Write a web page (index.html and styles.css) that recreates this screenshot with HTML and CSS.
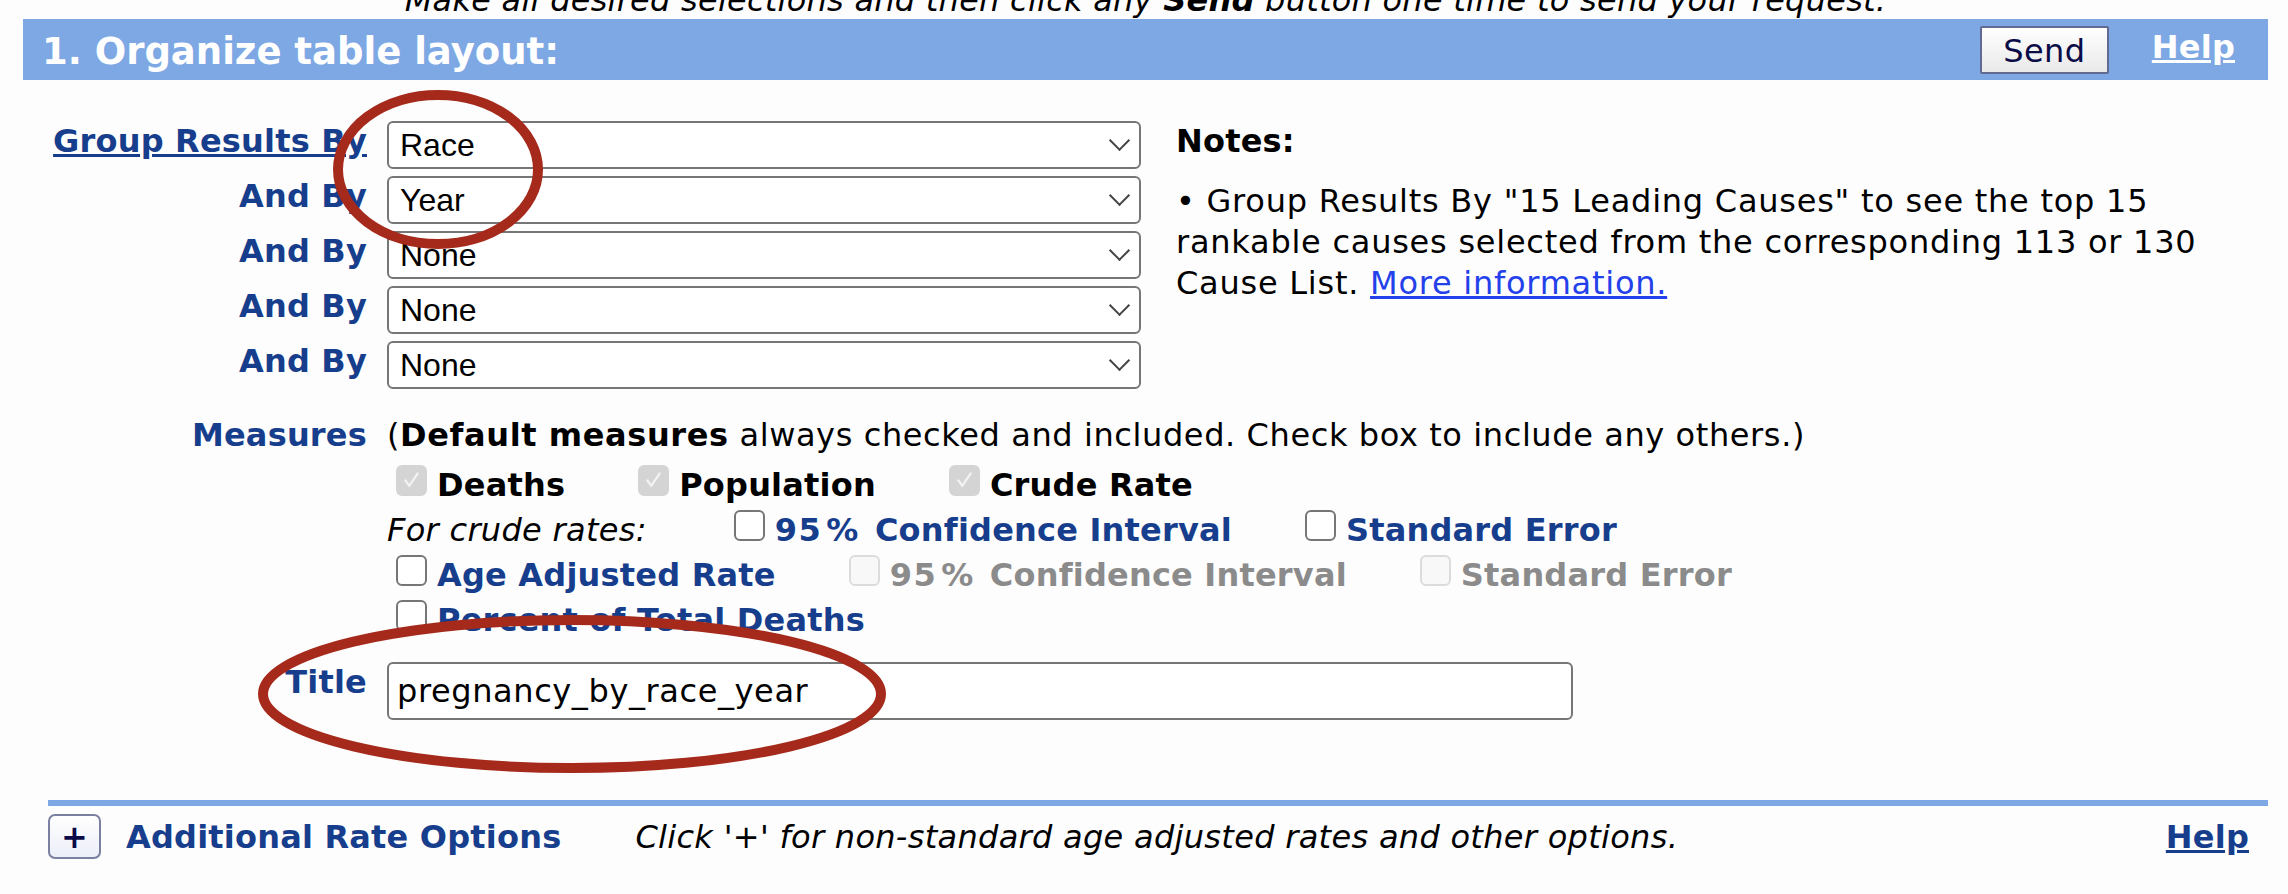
FILE: index.html
```html
<!DOCTYPE html>
<html lang="en">
<head>
<meta charset="utf-8">
<title>Organize table layout</title>
<link rel="stylesheet" href="styles.css">
</head>
<body>
<div class="page">
  <p class="instructions">Make all desired selections and then click any <b>Send</b> button one time to send your request.</p>

  <div class="section-bar">
    <h2 class="section-title">1. Organize table layout:</h2>
    <button class="send-btn" type="button">Send</button>
    <a class="bar-help" href="#">Help</a>
  </div>

  <form class="layout-form">
    <a class="field-label link-label" href="#">Group Results By</a>
    <div class="select-wrap"><select><option>Race</option></select></div>

    <div class="notes">
      <p class="notes-title">Notes:</p>
      <p class="notes-text">&bull; Group Results By "15 Leading Causes" to see the top 15 rankable causes selected from the corresponding 113 or 130 Cause List. <a href="#">More information.</a></p>
    </div>

    <span class="field-label">And By</span>
    <div class="select-wrap"><select><option>Year</option></select></div>
    <span class="field-label">And By</span>
    <div class="select-wrap"><select><option>None</option></select></div>
    <span class="field-label">And By</span>
    <div class="select-wrap"><select><option>None</option></select></div>
    <span class="field-label">And By</span>
    <div class="select-wrap"><select><option>None</option></select></div>

    <span class="field-label measures-label">Measures</span>
    <div class="measures">
      <p class="measures-intro">(<b>Default measures</b> always checked and included. Check box to include any others.)</p>
      <div class="measure-row">
        <label class="cb-item strong"><span class="cb cb-on"><svg viewBox="0 0 31 31"><path d="M8.5 15.5 L13 21.5 L22.5 7.5"/></svg></span>Deaths</label>
        <label class="cb-item strong"><span class="cb cb-on"><svg viewBox="0 0 31 31"><path d="M8.5 15.5 L13 21.5 L22.5 7.5"/></svg></span>Population</label>
        <label class="cb-item strong"><span class="cb cb-on"><svg viewBox="0 0 31 31"><path d="M8.5 15.5 L13 21.5 L22.5 7.5"/></svg></span>Crude Rate</label>
      </div>
      <div class="measure-row">
        <span class="crude-label">For crude rates:</span>
        <label class="cb-item blue"><span class="cb"></span><span class="num">95</span><span class="pct">%</span> Confidence Interval</label>
        <label class="cb-item blue"><span class="cb"></span>Standard Error</label>
      </div>
      <div class="measure-row">
        <label class="cb-item blue"><span class="cb"></span>Age Adjusted Rate</label>
        <label class="cb-item disabled"><span class="cb cb-disabled"></span><span class="num">95</span><span class="pct">%</span> Confidence Interval</label>
        <label class="cb-item disabled"><span class="cb cb-disabled"></span>Standard Error</label>
      </div>
      <div class="measure-row">
        <label class="cb-item blue"><span class="cb"></span>Percent of Total Deaths</label>
      </div>
    </div>

    <span class="field-label title-label">Title</span>
    <div class="title-cell"><input class="title-input" type="text" value="pregnancy_by_race_year"></div>
  </form>

  <div class="separator"></div>

  <div class="options-row">
    <button class="plus-btn" type="button">+</button>
    <span class="options-title">Additional Rate Options</span>
    <span class="options-note">Click '+' for non-standard age adjusted rates and other options.</span>
    <a class="options-help" href="#">Help</a>
  </div>
</div>

<svg class="annotations" viewBox="0 0 2288 894" width="2288" height="894">
  <ellipse cx="438" cy="169.5" rx="100" ry="74.5"/>
  <ellipse cx="572" cy="694" rx="309" ry="74"/>
</svg>
</body>
</html>
```

FILE: styles.css
```css
* {
  box-sizing: border-box;
}

html,
body {
  margin: 0;
  padding: 0;
}

body {
  background: #fdfdfe;
  font-family: "DejaVu Sans", Verdana, sans-serif;
  font-size: 32px;
  color: #000;
  letter-spacing: 0.6px;
  overflow: hidden;
}

.page {
  padding: 0 20px 0 23px;
}

.instructions {
  margin: -18px 0 0;
  text-align: center;
  font-style: italic;
  line-height: 37px;
  letter-spacing: 0.25px;
}

/* ---------- section header bar ---------- */
.section-bar {
  display: flex;
  align-items: center;
  height: 61px;
  padding: 0 33px 0 19px;
  background: #7da8e4;
}

.section-title {
  flex: 1;
  margin: 3px 0 0;
  font-size: 37px;
  line-height: 43px;
  font-weight: bold;
  color: #fff;
  letter-spacing: 0;
}

.send-btn {
  width: 129px;
  height: 48px;
  margin-right: 43px;
  padding: 3px 0 0;
  border: 2px solid #636a92;
  border-radius: 2px;
  background: linear-gradient(#ffffff, #e9e9e9);
  font-family: "DejaVu Sans", Verdana, sans-serif;
  font-size: 32px;
  letter-spacing: 0.4px;
  color: #0b0b47;
}

.bar-help {
  margin-bottom: 6px;
  font-weight: bold;
  color: #fff;
  letter-spacing: 0.2px;
  text-decoration: underline;
}

/* ---------- form grid ---------- */
.layout-form {
  display: grid;
  grid-template-columns: 344px 754px 1fr;
  column-gap: 20px;
  row-gap: 7px;
  margin-top: 41px;
}

.field-label {
  grid-column: 1;
  text-align: right;
  font-weight: bold;
  color: #163e8c;
  line-height: 40px;
  letter-spacing: 0.2px;
  white-space: nowrap;
}

.link-label {
  text-decoration: underline;
}

.select-wrap {
  grid-column: 2;
  position: relative;
  height: 48px;
}

.select-wrap select {
  appearance: none;
  -webkit-appearance: none;
  width: 100%;
  height: 48px;
  padding: 0 40px 0 11px;
  border: 2px solid #767676;
  border-radius: 6px;
  background: #fff;
  font-family: "Liberation Sans", Arial, sans-serif;
  font-size: 32px;
  letter-spacing: 0;
  color: #000;
}

.select-wrap::after {
  content: "";
  position: absolute;
  right: 14px;
  top: 12px;
  width: 13px;
  height: 13px;
  border-right: 2px solid #444;
  border-bottom: 2px solid #444;
  transform: rotate(45deg);
  pointer-events: none;
}

.notes {
  grid-column: 3;
  grid-row: 1 / span 5;
  margin-left: 15px;
  padding-right: 20px;
  line-height: 41px;
  letter-spacing: 0.75px;
}

.notes p {
  margin: 0;
}

.notes-title {
  font-weight: bold;
  letter-spacing: 0.2px;
}

.notes .notes-text {
  margin-top: 19px;
}

.notes a {
  color: #2340ea;
  text-decoration: underline;
}

/* ---------- measures ---------- */
.measures-label {
  margin-top: 17px;
  line-height: 45px;
}

.measures {
  grid-column: 2 / span 2;
  margin-top: 17px;
  line-height: 45px;
}

.measures-intro {
  margin: 0 0 5px;
}

.measure-row {
  display: flex;
  align-items: baseline;
  column-gap: 64px;
  white-space: nowrap;
}

.cb {
  display: inline-block;
  width: 31px;
  height: 31px;
  margin: 0 10px 0 9px;
  border: 2px solid #767676;
  border-radius: 6px;
  background: #fff;
  vertical-align: baseline;
}

.cb svg {
  display: block;
  width: 27px;
  height: 27px;
}

.cb svg path {
  fill: none;
  stroke: #f3f3f3;
  stroke-width: 2.6;
  stroke-linecap: round;
  stroke-linejoin: round;
}

.cb-on {
  border-color: #d4d4d4;
  background: #d4d4d4;
}

.cb-disabled {
  border-color: #dcdcdc;
  background: #f8f8f8;
}

.num {
  letter-spacing: 1.5px;
}

.pct {
  padding: 0 5px 0 4px;
}

.strong {
  font-weight: bold;
  letter-spacing: 0.2px;
}

.blue {
  font-weight: bold;
  color: #163e8c;
  letter-spacing: 0.2px;
}

.disabled {
  font-weight: bold;
  color: #8b8b8b;
  letter-spacing: 0.2px;
}

.crude-label {
  margin-right: 14px;
  font-style: italic;
  letter-spacing: 0.3px;
}

/* ---------- title ---------- */
.title-label {
  margin-top: 12px;
}

.title-cell {
  grid-column: 2 / span 2;
  margin-top: 12px;
}

.title-input {
  display: block;
  width: 1186px;
  height: 58px;
  padding: 0 8px;
  border: 2px solid #767676;
  border-radius: 6px;
  background: #fff;
  font-family: "DejaVu Sans", Verdana, sans-serif;
  font-size: 32px;
  letter-spacing: 0.6px;
  color: #000;
}

/* ---------- bottom options ---------- */
.separator {
  height: 6px;
  margin: 80px 0 0 25px;
  background: #7da8e4;
}

.options-row {
  display: flex;
  align-items: center;
  margin-top: 8px;
  padding-left: 25px;
}

.plus-btn {
  width: 53px;
  height: 45px;
  padding: 0;
  border: 2px solid #7b80a0;
  border-radius: 7px;
  background: linear-gradient(#ffffff, #eceef8);
  font-family: "DejaVu Sans", Verdana, sans-serif;
  font-size: 32px;
  font-weight: bold;
  line-height: 1;
  color: #0b0b47;
}

.options-title {
  margin-left: 25px;
  font-weight: bold;
  color: #163e8c;
  letter-spacing: 0.2px;
}

.options-note {
  flex: 1;
  margin-left: 74px;
  font-style: italic;
  letter-spacing: 0.3px;
}

.options-help {
  margin-right: 19px;
  font-weight: bold;
  color: #163e8c;
  letter-spacing: 0.2px;
  text-decoration: underline;
}

/* ---------- red annotation ellipses ---------- */
.annotations {
  position: absolute;
  left: 0;
  top: 0;
  pointer-events: none;
}

.annotations ellipse {
  fill: none;
  stroke: #a52a1b;
  stroke-width: 10;
}
```
